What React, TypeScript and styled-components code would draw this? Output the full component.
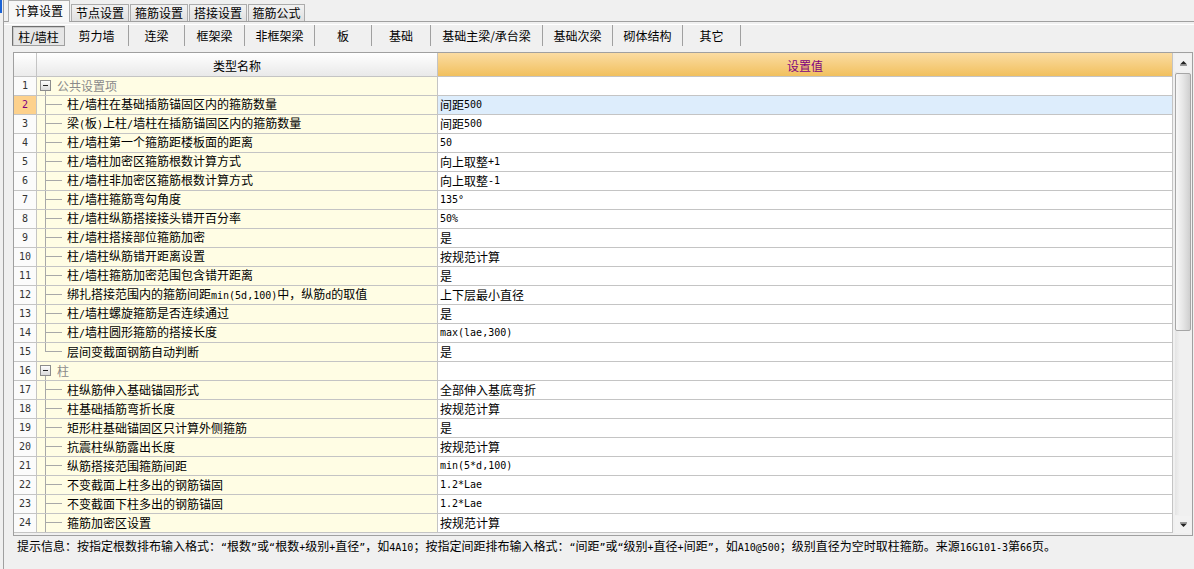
import React from 'react'
import styled, { createGlobalStyle, css } from 'styled-components'

const GlobalStyle = createGlobalStyle`
  html, body {
    margin: 0;
    padding: 0;
    background: #f0f0f0;
  }
  body {
    font-family: 'Noto Sans CJK SC', 'Microsoft YaHei', sans-serif;
    font-size: 12px;
    color: #000;
  }
`

type GridRow =
  | { kind: 'group'; label: string }
  | { kind: 'item'; label: string; value: string; last?: boolean }

const rows: GridRow[] = [
  { kind: 'group', label: '公共设置项' },
  { kind: 'item', label: '柱/墙柱在基础插筋锚固区内的箍筋数量', value: '间距500' },
  { kind: 'item', label: '梁(板)上柱/墙柱在插筋锚固区内的箍筋数量', value: '间距500' },
  { kind: 'item', label: '柱/墙柱第一个箍筋距楼板面的距离', value: '50' },
  { kind: 'item', label: '柱/墙柱加密区箍筋根数计算方式', value: '向上取整+1' },
  { kind: 'item', label: '柱/墙柱非加密区箍筋根数计算方式', value: '向上取整-1' },
  { kind: 'item', label: '柱/墙柱箍筋弯勾角度', value: '135°' },
  { kind: 'item', label: '柱/墙柱纵筋搭接接头错开百分率', value: '50%' },
  { kind: 'item', label: '柱/墙柱搭接部位箍筋加密', value: '是' },
  { kind: 'item', label: '柱/墙柱纵筋错开距离设置', value: '按规范计算' },
  { kind: 'item', label: '柱/墙柱箍筋加密范围包含错开距离', value: '是' },
  { kind: 'item', label: '绑扎搭接范围内的箍筋间距min(5d,100)中，纵筋d的取值', value: '上下层最小直径' },
  { kind: 'item', label: '柱/墙柱螺旋箍筋是否连续通过', value: '是' },
  { kind: 'item', label: '柱/墙柱圆形箍筋的搭接长度', value: 'max(lae,300)' },
  { kind: 'item', label: '层间变截面钢筋自动判断', value: '是', last: true },
  { kind: 'group', label: '柱' },
  { kind: 'item', label: '柱纵筋伸入基础锚固形式', value: '全部伸入基底弯折' },
  { kind: 'item', label: '柱基础插筋弯折长度', value: '按规范计算' },
  { kind: 'item', label: '矩形柱基础锚固区只计算外侧箍筋', value: '是' },
  { kind: 'item', label: '抗震柱纵筋露出长度', value: '按规范计算' },
  { kind: 'item', label: '纵筋搭接范围箍筋间距', value: 'min(5*d,100)' },
  { kind: 'item', label: '不变截面上柱多出的钢筋锚固', value: '1.2*Lae' },
  { kind: 'item', label: '不变截面下柱多出的钢筋锚固', value: '1.2*Lae' },
  { kind: 'item', label: '箍筋加密区设置', value: '按规范计算' },
]

const topTabs = [
  { label: '计算设置', width: 62 },
  { label: '节点设置', width: 58 },
  { label: '箍筋设置', width: 58 },
  { label: '搭接设置', width: 58 },
  { label: '箍筋公式', width: 57 },
]

const subTabs = [
  { label: '柱/墙柱', width: 53 },
  { label: '剪力墙', width: 64 },
  { label: '连梁', width: 56 },
  { label: '框架梁', width: 60 },
  { label: '非框架梁', width: 70 },
  { label: '板', width: 57 },
  { label: '基础', width: 59 },
  { label: '基础主梁/承台梁', width: 112 },
  { label: '基础次梁', width: 70 },
  { label: '砌体结构', width: 70 },
  { label: '其它', width: 58 },
]

const SELECTED_ROW = 2

const HINT =
  '提示信息：按指定根数排布输入格式：“根数”或“根数+级别+直径”，如4A10；按指定间距排布输入格式：“间距”或“级别+直径+间距”，如A10@500；级别直径为空时取柱箍筋。来源16G101-3第66页。'

// latin runs are drawn in a narrow monospace, like the bitmap font of the original
const Mixed = ({ text }: { text: string }) => {
  const parts = text.split(/([\x21-\x7e°“”]+)/)
  return (
    <>
      {parts.map((p, i) => (i % 2 === 1 ? <Ascii key={i}>{p}</Ascii> : p))}
    </>
  )
}

const App = () => {
  return (
    <Window>
      <GlobalStyle />
      <LeftEdge>
        <EdgeMark />
      </LeftEdge>
      <Main>
        <TabStrip>
          {topTabs.map((t, i) => (
            <Tab key={t.label} $active={i === 0} $w={t.width}>
              {t.label}
            </Tab>
          ))}
        </TabStrip>

        <SubBar>
          {subTabs.map((t, i) => (
            <SubItem key={t.label} $w={t.width} $pressed={i === 0}>
              {t.label}
            </SubItem>
          ))}
        </SubBar>

        <GridBox>
          <Table>
            <HeaderRow>
              <NumHeader />
              <NameHeader>类型名称</NameHeader>
              <ValueHeader>设置值</ValueHeader>
            </HeaderRow>
            {rows.map((r, i) => {
              const n = i + 1
              const selected = n === SELECTED_ROW
              return (
                <DataRow key={n}>
                  <NumCell $selected={selected}>{n}</NumCell>
                  <NameCell>
                    {r.kind === 'group' ? (
                      <>
                        <GroupIcon />
                        <GroupLabel>{r.label}</GroupLabel>
                      </>
                    ) : (
                      <>
                        <TreeLine last={r.last} />
                        <span>
                          <Mixed text={r.label} />
                        </span>
                      </>
                    )}
                  </NameCell>
                  <ValueCell $selected={selected}>
                    {r.kind === 'item' ? <Mixed text={r.value} /> : null}
                  </ValueCell>
                </DataRow>
              )
            })}
          </Table>
          <ScrollBar>
            <ScrollButton>
              <svg width="9" height="6" viewBox="0 0 9 6">
                <path d="M1 4.5 L4.5 1 L8 4.5 Z" fill="#222" />
                <path d="M1 5.5 H8" stroke="#999" strokeWidth="1" />
              </svg>
            </ScrollButton>
            <Track>
              <Thumb />
            </Track>
            <ScrollButton>
              <svg width="9" height="6" viewBox="0 0 9 6">
                <path d="M1 0.5 H8" stroke="#999" strokeWidth="1" />
                <path d="M1 1.5 L4.5 5 L8 1.5 Z" fill="#222" />
              </svg>
            </ScrollButton>
          </ScrollBar>
        </GridBox>

        <Hint>
          <Mixed text={HINT} />
        </Hint>
      </Main>
    </Window>
  )
}

const GroupIcon = () => (
  <svg width="20" height="18" viewBox="0 0 20 18" style={{ flex: 'none' }}>
    <defs>
      <linearGradient id="boxg" x1="0" y1="0" x2="0" y2="1">
        <stop offset="0" stopColor="#ffffff" />
        <stop offset="1" stopColor="#d8d8d8" />
      </linearGradient>
    </defs>
    <rect x="3.5" y="3.5" width="10" height="10" fill="url(#boxg)" stroke="#8c8c8c" />
    <path d="M6 8.5 H11" stroke="#222" strokeWidth="1" />
    <path d="M8.5 14 V18" stroke="#a8a8a8" strokeWidth="1" />
  </svg>
)

const TreeLine = ({ last }: { last?: boolean }) => (
  <svg width="30" height="18" viewBox="0 0 30 18" style={{ flex: 'none' }}>
    <path d={last ? 'M8.5 0 V9' : 'M8.5 0 V18'} stroke="#a8a8a8" strokeWidth="1" />
    <path d="M8 8.5 H25" stroke="#a8a8a8" strokeWidth="1" />
  </svg>
)

const Window = styled.div`
  width: 1194px;
  height: 569px;
  display: flex;
  overflow: hidden;
  background: #f0f0f0;
`

const LeftEdge = styled.div`
  width: 3px;
  flex: none;
  border-right: 1px solid #a0a0a0;
`

const EdgeMark = styled.div`
  width: 2px;
  height: 13px;
  background: #1a62d6;
`

const Main = styled.div`
  flex: 1;
  display: flex;
  flex-direction: column;
  min-width: 0;
`

const Ascii = styled.span`
  font-family: 'DejaVu Sans Mono', 'Liberation Mono', monospace;
  font-size: 10px;
`

const TabStrip = styled.div`
  display: flex;
  align-items: flex-end;
  gap: 1px;
  height: 21px;
  padding-left: 4px;
  border-bottom: 1px solid #a0a0a0;
`

const Tab = styled.div<{ $active?: boolean; $w: number }>`
  box-sizing: border-box;
  width: ${({ $w }) => $w}px;
  height: 17px;
  border: 1px solid #acacac;
  border-bottom: none;
  background: linear-gradient(#f2f2f2, #e0e0e0);
  display: flex;
  align-items: center;
  justify-content: center;
  line-height: 14px;
  color: #000;
  ${({ $active }) =>
    $active &&
    css`
      height: 22px;
      margin-bottom: -1px;
      background: #f7f7f7;
      padding-bottom: 2px;
    `}
`

const SubBar = styled.div`
  display: flex;
  box-sizing: border-box;
  height: 23px;
  margin-top: 2px;
  padding-left: 8px;
  border-top: 1px solid #fff;
`

const SubItem = styled.div<{ $w: number; $pressed?: boolean }>`
  box-sizing: border-box;
  width: ${({ $w }) => $w}px;
  height: 21px;
  display: flex;
  align-items: center;
  justify-content: center;
  line-height: 14px;
  border-right: 1px solid #a0a0a0;
  ${({ $pressed }) =>
    $pressed &&
    css`
      margin-top: 1px;
      height: 20px;
      border: 1px solid #a0a0a0;
      border-top-color: #6f6f6f;
      border-left-color: #6f6f6f;
      background: #e6e6e6;
      box-shadow: inset 1px 1px 0 #c8c8c8;
      padding-top: 1px;
    `}
`

const GridBox = styled.div`
  box-sizing: border-box;
  width: 1180px;
  height: 484px;
  margin-top: 5px;
  margin-left: 9px;
  border: 1px solid #a0a0a0;
  background: #f0f0f0;
  display: flex;
`

const Table = styled.div`
  width: 1159px;
  flex: none;
  display: flex;
  flex-direction: column;
`

const rowGrid = css`
  display: grid;
  grid-template-columns: 23px 401px 735px;
`

const cellBase = css`
  box-sizing: border-box;
  border-right: 1px solid #c4c4c4;
  border-bottom: 1px solid #c4c4c4;
  display: flex;
  align-items: center;
  white-space: nowrap;
  overflow: hidden;
`

const HeaderRow = styled.div`
  ${rowGrid};
  height: 24px;
`

const NumHeader = styled.div`
  ${cellBase};
  background: linear-gradient(#ffffff, #ebebeb);
`

const NameHeader = styled.div`
  ${cellBase};
  justify-content: center;
  background: linear-gradient(#ffffff, #e9e9e9);
  padding-top: 1px;
`

const ValueHeader = styled.div`
  ${cellBase};
  justify-content: center;
  background: linear-gradient(#fbdca2, #f1c05e);
  color: #800080;
  padding-top: 1px;
`

const DataRow = styled.div`
  ${rowGrid};
  height: 19px;
  line-height: 18px;
`

const NumCell = styled.div<{ $selected?: boolean }>`
  ${cellBase};
  justify-content: center;
  font-family: 'DejaVu Sans Mono', 'Liberation Mono', monospace;
  font-size: 10px;
  color: #333;
  background: ${({ $selected }) => ($selected ? '#fdd18c' : '#fbfbfb')};
  ${({ $selected }) => $selected && 'color: #800080;'}
`

const NameCell = styled.div`
  ${cellBase};
  background: #fffde4;
`

const GroupLabel = styled.span`
  color: #8a8a8a;
`

const ValueCell = styled.div<{ $selected?: boolean }>`
  ${cellBase};
  padding-left: 2px;
  background: ${({ $selected }) => ($selected ? '#ddedfc' : '#ffffff')};
`

const ScrollBar = styled.div`
  flex: 1;
  display: flex;
  flex-direction: column;
  padding: 1px 1px 2px 2px;
  gap: 1px;
`

const ScrollButton = styled.div`
  height: 17px;
  flex: none;
  display: flex;
  align-items: center;
  justify-content: center;
  background: #f2f2f2;
`

const Track = styled.div`
  flex: 1;
  display: flex;
  flex-direction: column;
  background: linear-gradient(90deg, #e4e4e4, #f0f0f0 30%, #f0f0f0);
  padding-top: 1px;
`

const Thumb = styled.div`
  box-sizing: border-box;
  height: 258px;
  border: 1px solid #a6a6a6;
  border-radius: 2px;
  background: linear-gradient(90deg, #f8f8f8, #e6e6e6 50%, #cfcfcf);
`

const Hint = styled.div`
  margin-top: 3px;
  padding-left: 13px;
  line-height: 14px;
  white-space: nowrap;
`

export default App
